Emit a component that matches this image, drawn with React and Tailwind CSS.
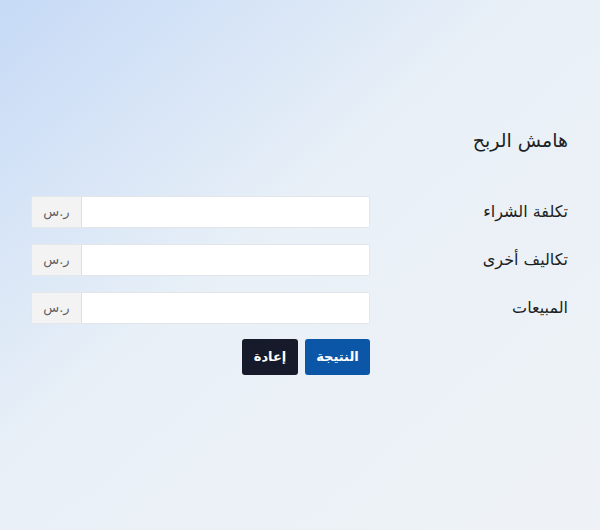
import React from "react";

const fields = ["تكلفة الشراء", "تكاليف أخرى", "المبيعات"];

const App = () => {
  return (
    <div
      dir="rtl"
      className="w-[600px] h-[530px] overflow-hidden bg-gradient-to-br from-[#c6daf6] via-[#e9f0f7] via-45% to-[#eef2f6] text-[#1c1f26]"
      style={{ fontFamily: '"DejaVu Sans", sans-serif' }}
    >
      <div className="pr-[32px] pl-[31px] pt-[127px]">
        {/* Title */}
        <h2 className="text-[19px] leading-[26px] font-normal">هامش الربح</h2>

        {/* Fields */}
        <div className="mt-[43px] flex flex-col gap-[16px]">
          {fields.map((label) => (
            <div key={label} className="flex items-center justify-between">
              <label className="text-[16px] leading-[24px]">{label}</label>
              <div className="flex w-[339px] h-[32px] rounded-[2px] border border-[#e3e6ea] bg-white overflow-hidden">
                <input className="flex-1 min-w-0 bg-white outline-none px-2" />
                <span className="w-[50px] shrink-0 flex items-center justify-center bg-[#f3f3f4] border-r border-[#dcdfe3] text-[13px] text-[#5f5f66]">
                  ر.س
                </span>
              </div>
            </div>
          ))}
        </div>

        {/* Buttons */}
        <div className="mt-[15px] flex justify-end">
          <div className="w-[339px] flex gap-[7px]">
            <button className="w-[65px] h-[36px] rounded-[3px] bg-[#0c56a8] text-white text-[13px] font-bold">
              النتيجة
            </button>
            <button className="w-[56px] h-[36px] rounded-[3px] bg-[#161a2a] text-white text-[13px] font-bold">
              إعادة
            </button>
          </div>
        </div>
      </div>
    </div>
  );
};

export default App;
